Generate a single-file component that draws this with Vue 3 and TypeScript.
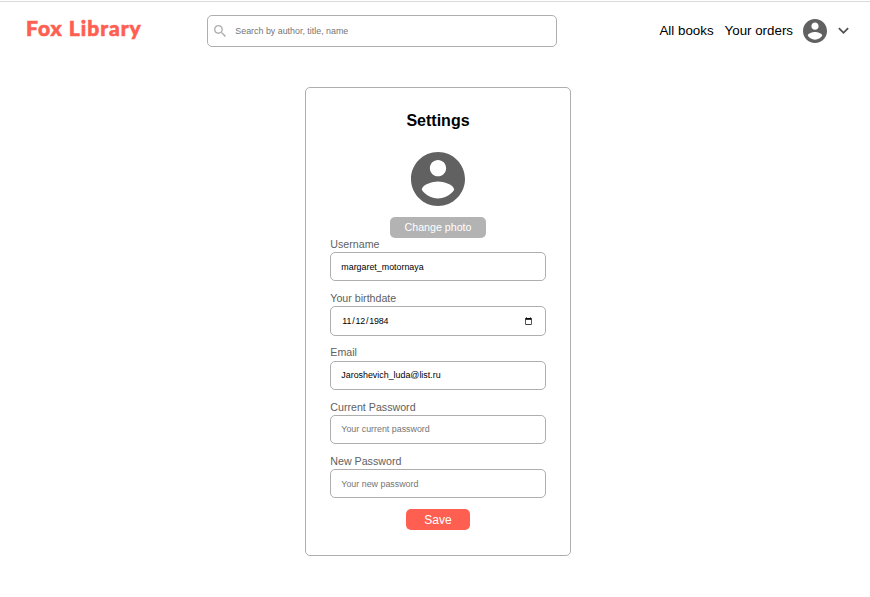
<script setup lang="ts">
import { reactive, ref } from 'vue'

interface Field {
  key: 'username' | 'birthdate' | 'email' | 'currentPassword' | 'newPassword'
  label: string
  type: string
  placeholder: string
}

const fields: Field[] = [
  { key: 'username', label: 'Username', type: 'text', placeholder: '' },
  { key: 'birthdate', label: 'Your birthdate', type: 'date', placeholder: '' },
  { key: 'email', label: 'Email', type: 'text', placeholder: '' },
  { key: 'currentPassword', label: 'Current Password', type: 'password', placeholder: 'Your current password' },
  { key: 'newPassword', label: 'New Password', type: 'password', placeholder: 'Your new password' },
]

const form = reactive<Record<Field['key'], string>>({
  username: 'margaret_motornaya',
  birthdate: '1984-11-12',
  email: 'Jaroshevich_luda@list.ru',
  currentPassword: '',
  newPassword: '',
})

const query = ref('')
const avatarPath =
  'M12 2C6.48 2 2 6.48 2 12s4.48 10 10 10 10-4.48 10-10S17.52 2 12 2zm0 3c1.66 0 3 1.34 3 3s-1.34 3-3 3-3-1.34-3-3 1.34-3 3-3zm0 14.2c-2.5 0-4.71-1.28-6-3.22.03-1.99 4-3.08 6-3.08 1.99 0 5.97 1.09 6 3.08-1.29 1.94-3.5 3.22-6 3.22z'
</script>

<template>
  <div class="page">
    <header class="header">
      <a class="logo">Fox Library</a>
      <label class="search">
        <svg class="search-icon" viewBox="3 3 17.5 17.5">
          <path d="M15.5 14h-.79l-.28-.27C15.41 12.59 16 11.11 16 9.5 16 5.91 13.09 3 9.5 3S3 5.91 3 9.5 5.91 16 9.5 16c1.61 0 3.09-.59 4.23-1.57l.27.28v.79l5 4.99L20.49 19l-4.99-5zm-6 0C7.01 14 5 11.99 5 9.5S7.01 5 9.5 5 14 7.01 14 9.5 11.99 14 9.5 14z" />
        </svg>
        <input v-model="query" class="search-input" placeholder="Search by author, title, name" />
      </label>
      <nav class="nav">
        <a class="link">All books</a>
        <a class="link">Your orders</a>
        <svg class="avatar-small" viewBox="2 2 20 20"><path :d="avatarPath" /></svg>
        <svg class="chevron" viewBox="6 8 12 8"><path d="M7.41 8.59 12 13.17l4.59-4.58L18 10l-6 6-6-6 1.41-1.41z" /></svg>
      </nav>
    </header>

    <main class="card">
      <h1 class="title">Settings</h1>
      <svg class="avatar" viewBox="2 2 20 20"><path :d="avatarPath" /></svg>
      <button class="change" type="button">Change photo</button>
      <form class="form" @submit.prevent>
        <label v-for="field in fields" :key="field.key" class="field">
          <span class="label">{{ field.label }}</span>
          <input v-model="form[field.key]" class="input" :class="{ date: field.type === 'date' }" :type="field.type" :placeholder="field.placeholder" />
        </label>
        <button class="save" type="submit">Save</button>
      </form>
    </main>
  </div>
</template>

<style>
body {
  background: #fff;
}
</style>

<style scoped>
.page {
  box-sizing: border-box;
  height: 597px;
  padding-top: 1px;
  overflow: hidden;
  font-family: 'Liberation Sans', Arial, sans-serif;
  color: #000;
}
.header {
  display: flex;
  align-items: flex-start;
  box-sizing: border-box;
  height: 86px;
  padding: 13px 21px 0 26px;
  border-top: 1px solid #d8dadb;
}
.logo {
  width: 181px;
  font: 900 21px/25px Lato, sans-serif;
  letter-spacing: 1px;
  white-space: nowrap;
  color: #ff5f51;
  -webkit-text-stroke: 0.6px #ff5f51;
}
.search {
  display: flex;
  align-items: center;
  box-sizing: border-box;
  width: 350px;
  height: 32px;
  padding: 0 6px;
  border: 1px solid #aeaeae;
  border-radius: 5px;
}
.search-icon {
  width: 12px;
  height: 12px;
  margin-right: 9.3px;
  fill: #aeaeae;
}
.search-input {
  flex: 1;
  min-width: 0;
  padding: 0;
  border: 0;
  outline: 0;
  background: none;
  font: 8.89px 'Liberation Sans', Arial, sans-serif;
}
.nav {
  display: flex;
  align-items: center;
  height: 32px;
  margin-left: auto;
  font-size: 13.33px;
  white-space: nowrap;
}
.link {
  margin-right: 11px;
  padding-bottom: 2px;
}
.link + .avatar-small {
  margin-left: -1px;
}
.avatar-small {
  width: 24px;
  height: 24px;
  margin-right: 11px;
  fill: #616161;
}
.chevron {
  width: 11px;
  height: 7px;
  margin-bottom: 1px;
  fill: #505050;
}
.card {
  display: flex;
  flex-direction: column;
  align-items: center;
  box-sizing: border-box;
  width: 266px;
  height: 469px;
  margin-left: 305px;
  padding: 24px 24px 0;
  border: 1px solid #aeaeae;
  border-radius: 5px;
}
.title {
  margin: 0 0 22px;
  font-size: 16px;
  line-height: 18px;
}
.avatar {
  flex: none;
  width: 54px;
  height: 54px;
  margin-bottom: 11px;
  fill: #616161;
}
.change,
.save {
  height: 21px;
  padding: 0;
  border: 0;
  border-radius: 5px;
  color: #fff;
  font-family: inherit;
}
.change {
  width: 96px;
  flex: none;
  padding-bottom: 1px;
  background: #b3b3b3;
  font-size: 10.67px;
}
.form {
  display: flex;
  flex-direction: column;
  align-items: center;
  width: 216px;
}
.field {
  display: flex;
  flex-direction: column;
  width: 100%;
  height: 54.25px;
}
.label {
  height: 14.15px;
  margin-top: -0.15px;
  padding-left: 0.3px;
  font-size: 10.67px;
  line-height: 13px;
  color: #616161;
}
.input {
  box-sizing: border-box;
  width: 216px;
  height: 29px;
  padding: 0 10.3px;
  border: 1px solid #aeaeae;
  border-radius: 5px;
  outline: 0;
  background: #fff;
  color: #000;
  font: 8.89px 'Liberation Sans', Arial, sans-serif;
}
.date {
  height: 29.5px;
  letter-spacing: -0.18px;
}
.input::placeholder,
.search-input::placeholder {
  color: #757575;
}
.save {
  width: 64px;
  background: #ff5f51;
  font-size: 12px;
}
</style>
